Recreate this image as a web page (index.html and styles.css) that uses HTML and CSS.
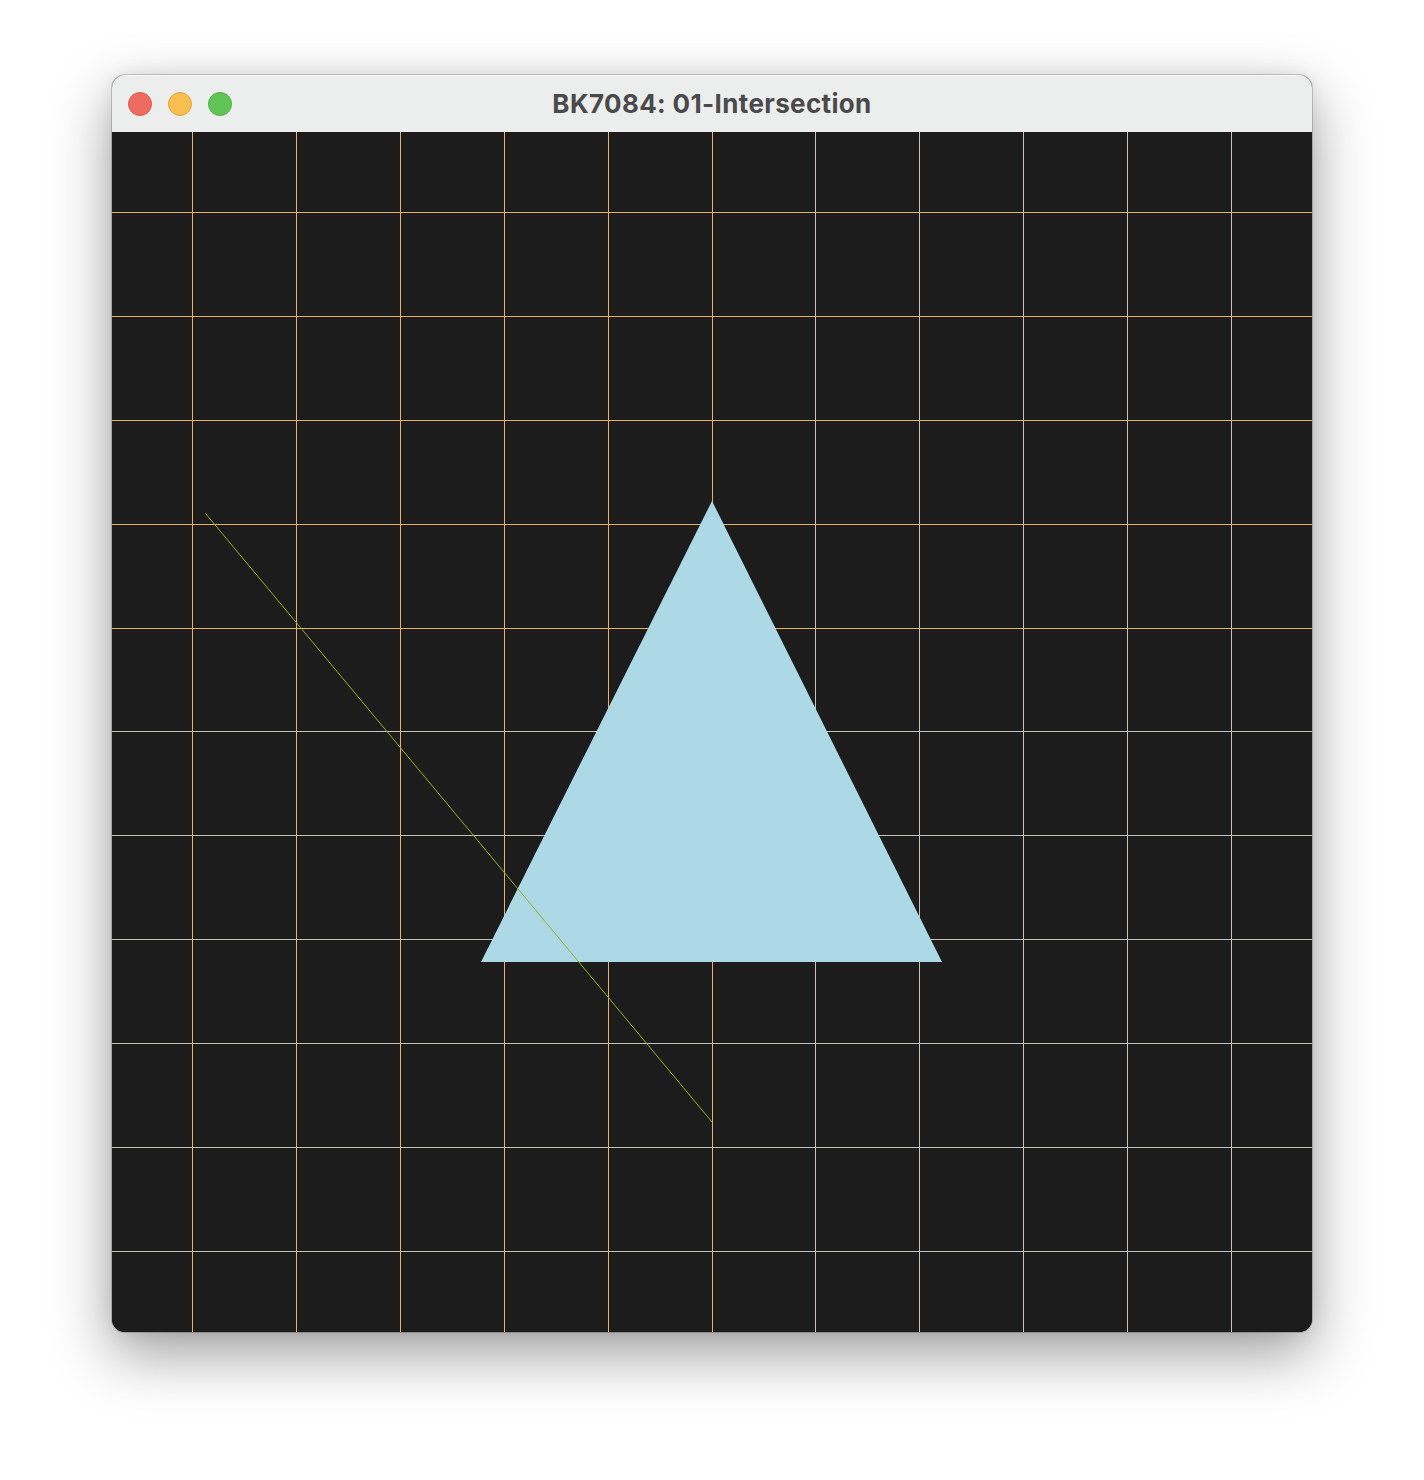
FILE: index.html
```html
<!DOCTYPE html>
<html>
<head>
<meta charset="utf-8">
<link rel="stylesheet" href="styles.css">
</head>
<body>
<div class="window">
  <div class="titlebar">
    <div class="lights">
      <span class="light red"></span>
      <span class="light yellow"></span>
      <span class="light green"></span>
    </div>
    <div class="title">BK7084: 01-Intersection</div>
    <div class="spacer"></div>
  </div>
  <div class="canvas">
    <svg class="scene" width="1200" height="1200" viewBox="0 0 1200 1200" xmlns="http://www.w3.org/2000/svg">
      <g class="grid-pale" shape-rendering="crispEdges">
        <line x1="703.5" y1="0" x2="703.5" y2="1200"/>
        <line x1="807.5" y1="0" x2="807.5" y2="1200"/>
        <line x1="911.5" y1="0" x2="911.5" y2="1200"/>
        <line x1="1015.5" y1="0" x2="1015.5" y2="1200"/>
        <line x1="1119.5" y1="0" x2="1119.5" y2="1200"/>
        <line x1="0" y1="599.5" x2="1200" y2="599.5"/>
        <line x1="0" y1="703.5" x2="1200" y2="703.5"/>
        <line x1="0" y1="807.5" x2="1200" y2="807.5"/>
        <line x1="0" y1="911.5" x2="1200" y2="911.5"/>
        <line x1="0" y1="1015.5" x2="1200" y2="1015.5"/>
        <line x1="0" y1="1119.5" x2="1200" y2="1119.5"/>
      </g>
      <g class="grid-warm" shape-rendering="crispEdges">
        <line x1="80.5" y1="0" x2="80.5" y2="1200"/>
        <line x1="184.5" y1="0" x2="184.5" y2="1200"/>
        <line x1="288.5" y1="0" x2="288.5" y2="1200"/>
        <line x1="392.5" y1="0" x2="392.5" y2="1200"/>
        <line x1="496.5" y1="0" x2="496.5" y2="1200"/>
        <line x1="600.5" y1="0" x2="600.5" y2="1200"/>
        <line x1="0" y1="80.5" x2="1200" y2="80.5"/>
        <line x1="0" y1="184.5" x2="1200" y2="184.5"/>
        <line x1="0" y1="288.5" x2="1200" y2="288.5"/>
        <line x1="0" y1="392.5" x2="1200" y2="392.5"/>
        <line x1="0" y1="496.5" x2="1200" y2="496.5"/>
      </g>
      <polygon class="tri" points="600,369 830,830 369,830"/>
      <line class="ray" x1="93.5" y1="381.5" x2="600" y2="990"/>
    </svg>
  </div>
</div>
</body>
</html>
```

FILE: styles.css
```css
html, body {
  margin: 0;
  padding: 0;
  background: #ffffff;
}
body {
  width: 1424px;
  height: 1480px;
  display: flex;
  justify-content: center;
  align-items: flex-start;
  padding-top: 75px;
  box-sizing: border-box;
  font-family: Inter, "Open Sans", "Liberation Sans", sans-serif;
  overflow: hidden;
}
.window {
  width: 1200px;
  border-radius: 13px;
  overflow: hidden;
  background: #1c1c1c;
  box-shadow: 0 0 0 1px rgba(0,0,0,0.18), 0 22px 60px rgba(0,0,0,0.38), 0 0 20px rgba(0,0,0,0.08);
}
.titlebar {
  height: 57px;
  background: #eceded;
  display: grid;
  grid-template-columns: 1fr auto 1fr;
  align-items: center;
  box-shadow: inset 0 1px 0 rgba(255,255,255,0.6);
}
.lights {
  display: flex;
  gap: 16px;
  padding-left: 16px;
  padding-top: 1px;
}
.light {
  width: 24px;
  height: 24px;
  border-radius: 50%;
  box-sizing: border-box;
}
.red { background: #ee6b60; border: 1px solid #d85a50; }
.yellow { background: #f6bf50; border: 1px solid #dea740; }
.green { background: #61c555; border: 1px solid #52ad46; }
.title {
  font-size: 26px;
  font-weight: 700;
  color: #4a4a4a;
  letter-spacing: 0.35px;
  padding-bottom: 1px;
}
.canvas {
  width: 1200px;
  height: 1200px;
  background: #1c1c1c;
}
.scene {
  display: block;
}
.grid-warm line {
  stroke: #e9b06a;
  stroke-width: 1;
}
.grid-pale line {
  stroke: #c9c1b8;
  stroke-width: 1;
}
.tri {
  fill: #add8e6;
}
.ray {
  stroke: #94b022;
  stroke-width: 1;
}
```
